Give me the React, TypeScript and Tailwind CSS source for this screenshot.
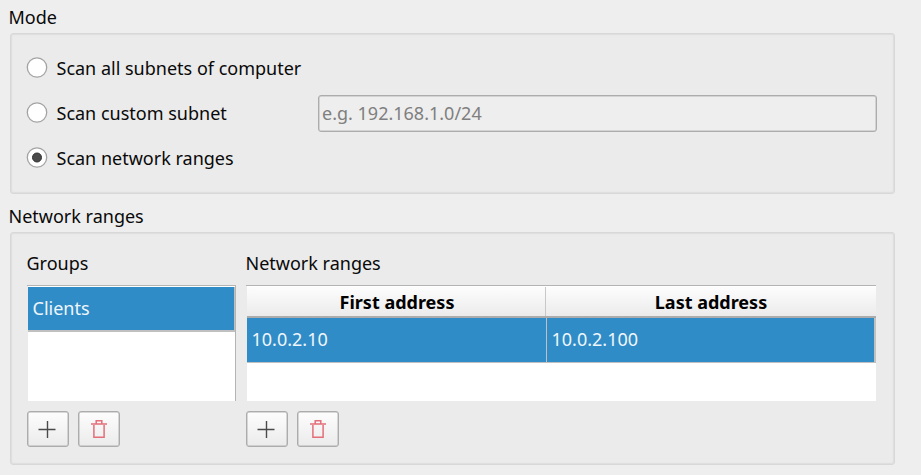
import type { ReactNode } from "react";

function Radio({ checked = false }: { checked?: boolean }) {
  return (
    <svg width="22" height="22" viewBox="0 0 22 22" className="shrink-0">
      <circle cx="11" cy="10.5" r="9.7" fill="#fff" stroke="#a3a3a3" strokeWidth="1.3" />
      {checked && <circle cx="11" cy="10.5" r="4.5" fill="#4a4a4a" stroke="#333" strokeWidth="1" />}
    </svg>
  );
}

function Option({ label, checked }: { label: string; checked?: boolean }) {
  return (
    <label className="flex h-[45px] items-center">
      <Radio checked={checked} />
      <span className="ml-[8.5px] leading-6">{label}</span>
    </label>
  );
}

function Panel({ className, children }: { className: string; children: ReactNode }) {
  return (
    <div
      className={
        "ml-[10px] w-[885px] rounded-[3px] border border-[#d8d8d8] bg-[#ebebeb] shadow-[inset_0_0_0_1px_#dfdfdf,inset_0_0_2px_1px_#e4e4e4] " +
        className
      }
    >
      {children}
    </div>
  );
}

function ToolButton({ children }: { children: ReactNode }) {
  return (
    <button className="flex h-9 w-[42px] items-center justify-center rounded-[3px] border border-[#acacac] bg-linear-to-b from-[#fdfdfd] to-[#ebebeb] shadow-[inset_0_0_0_0.5px_#b4b4b4]">
      {children}
    </button>
  );
}

function Buttons() {
  return (
    <div className="mt-[10px] flex gap-[9px]">
      <ToolButton>
        <svg width="18" height="18" viewBox="0 0 18 18" className="-translate-x-px">
          <path d="M.5 9.5h17M9.5 1v17" stroke="#4a4a4a" strokeWidth="1.4" fill="none" />
        </svg>
      </ToolButton>
      <ToolButton>
        <svg width="16" height="18" viewBox="0 0 16 18" fill="none" stroke="#e46e7a" strokeWidth="1.5">
          <path d="M0 4.1h16M5.2 3.6V.8h5.6v2.8M2.9 5v12.3h10.2V5" />
        </svg>
      </ToolButton>
    </div>
  );
}

export default function App() {
  return (
    <div className="h-[475px] w-[921px] overflow-hidden bg-[#eeeeee] font-['Noto_Sans',sans-serif] text-[18px] text-[#090909]">
      <div className="h-[33px] pl-[8.5px] pt-[5px] leading-6">Mode</div>
      <Panel className="flex h-[161px] pl-[15px] pt-[11px]">
        <div className="w-[292px]">
          <Option label="Scan all subnets of computer" />
          <Option label="Scan custom subnet" />
          <Option label="Scan network ranges" checked />
        </div>
        <input
          className="mt-[50px] h-[37px] w-[559px] rounded-[3px] border border-[#acacac] bg-[#eeeeee] px-[3px] pb-px shadow-[inset_0_0_0_0.5px_#b8b8b8] placeholder:text-[#7f7f7f]"
          placeholder="e.g. 192.168.1.0/24"
        />
      </Panel>
      <div className="h-[38px] pl-[8.5px] pt-[10px] leading-6">Network ranges</div>
      <Panel className="flex h-[233px] pl-[16px] pt-[18px]">
        <div className="w-[219px]">
          <div className="-ml-[0.5px] h-[34px] leading-6">Groups</div>
          <div className="h-[116px] w-[209px] border-t border-r border-[#b4b4b4] pl-px">
            <div className="h-full bg-white pt-px">
              <div className="h-[45px] border-r border-b-2 border-[#c0c0c0] bg-[#308cc6] pl-[4.5px] pt-[9px] leading-6 text-[#eff6fb]">
                Clients
              </div>
            </div>
          </div>
          <Buttons />
        </div>
        <div className="w-[630px]">
          <div className="-ml-[0.5px] h-[34px] leading-6">Network ranges</div>
          <div className="h-[116px] border-t border-[#b4b4b4] pl-px">
            <div className="h-full bg-white pt-px">
              <div className="flex h-[31px] border-b-2 border-[#acacac] bg-linear-to-b from-[#fdfdfd] to-[#ebebeb] text-center font-bold leading-[30px] text-black">
                <div className="w-[299px] border-r border-[#c8c8c8] pl-[2px]">First address</div>
                <div className="flex-1">Last address</div>
              </div>
              <div className="flex h-[45px] border-r-2 border-b border-[#c0c0c0] bg-[#308cc6] leading-[43px] text-[#eff6fb]">
                <div className="w-[300px] border-r border-[#c0c0c0] pl-[4.5px]">10.0.2.10</div>
                <div className="pl-[4.5px]">10.0.2.100</div>
              </div>
            </div>
          </div>
          <Buttons />
        </div>
      </Panel>
    </div>
  );
}
